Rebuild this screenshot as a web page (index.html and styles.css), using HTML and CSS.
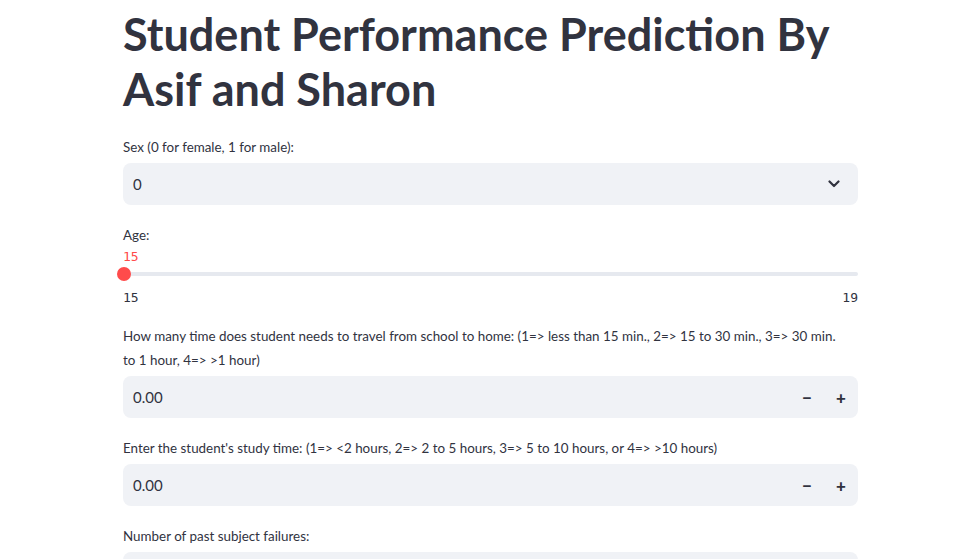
FILE: index.html
```html
<!DOCTYPE html>
<html>
<head>
<meta charset="utf-8">
<link rel="stylesheet" href="styles.css">
</head>
<body>
<main class="main">
  <h1 class="title">Student Performance Prediction By Asif and Sharon</h1>

  <div class="widget">
    <label class="label">Sex (0 for female, 1 for male):</label>
    <div class="field select">
      <span class="value">0</span>
      <svg class="chev" width="12" height="8" viewBox="0 0 12 8"><path d="M1.5 1.5 L6 6 L10.5 1.5" fill="none" stroke="#31333f" stroke-width="2.2" stroke-linecap="round" stroke-linejoin="round"/></svg>
    </div>
  </div>

  <div class="widget slider">
    <label class="label">Age:</label>
    <div class="slider-value">15</div>
    <div class="track"><span class="thumb"></span></div>
    <div class="ticks"><span>15</span><span>19</span></div>
  </div>

  <div class="widget">
    <label class="label">How many time does student needs to travel from school to home: (1=&gt; less than 15 min., 2=&gt; 15 to 30 min., 3=&gt; 30 min. to 1 hour, 4=&gt; &gt;1 hour)</label>
    <div class="field number">
      <span class="value">0.00</span>
      <div class="steppers">
        <span class="step">&minus;</span>
        <span class="step">+</span>
      </div>
    </div>
  </div>

  <div class="widget">
    <label class="label">Enter the student's study time: (1=&gt; &lt;2 hours, 2=&gt; 2 to 5 hours, 3=&gt; 5 to 10 hours, or 4=&gt; &gt;10 hours)</label>
    <div class="field number">
      <span class="value">0.00</span>
      <div class="steppers">
        <span class="step">&minus;</span>
        <span class="step">+</span>
      </div>
    </div>
  </div>

  <div class="widget">
    <label class="label">Number of past subject failures:</label>
    <div class="field number">
      <span class="value">0.00</span>
      <div class="steppers">
        <span class="step">&minus;</span>
        <span class="step">+</span>
      </div>
    </div>
  </div>
</main>
</body>
</html>
```

FILE: styles.css
```css
html, body {
  margin: 0;
  padding: 0;
  background: #ffffff;
  overflow: hidden;
}
body {
  font-family: Lato, "Noto Sans", sans-serif;
  color: #31333f;
}
.main {
  width: 735px;
  margin-left: 123px;
  display: flex;
  flex-direction: column;
  gap: 18px;
}
.title {
  font-size: 45px;
  line-height: 55px;
  font-weight: 700;
  margin: 7px 0 0 0;
  letter-spacing: 0;
  color: #31333f;
}
.widget {
  display: flex;
  flex-direction: column;
}
.label {
  font-size: 13.4px;
  line-height: 24px;
  margin-bottom: 4px;
  padding-right: 12px;
  color: #31333f;
}
.field {
  height: 42px;
  background: #f0f2f6;
  border-radius: 8px;
  display: flex;
  align-items: center;
  justify-content: space-between;
  padding: 0 10px;
  box-sizing: border-box;
}
.value {
  font-size: 15px;
  color: #31333f;
}
.select .chev {
  margin-right: 8px;
}
.steppers {
  display: flex;
  gap: 22px;
  margin-right: 1px;
}
.step {
  width: 12px;
  text-align: center;
  font-size: 17px;
  font-weight: 900;
  color: #31333f;
}
.slider .label {
  margin-bottom: 0;
}
.slider-value {
  margin-top: 2px;
  font-family: "DejaVu Sans Mono", "Liberation Mono", monospace;
  font-size: 13px;
  line-height: 16px;
  color: #ff4b4b;
}
.track {
  margin-top: 7px;
  height: 4px;
  background: #e6e9ef;
  border-radius: 2px;
  position: relative;
}
.thumb {
  position: absolute;
  left: -6px;
  top: -5px;
  width: 14px;
  height: 14px;
  border-radius: 50%;
  background: #ff4b4b;
}
.ticks {
  display: flex;
  justify-content: space-between;
  margin-top: 14px;
  font-family: "DejaVu Sans Mono", "Liberation Mono", monospace;
  font-size: 13px;
  line-height: 16px;
  color: #31333f;
}
```
